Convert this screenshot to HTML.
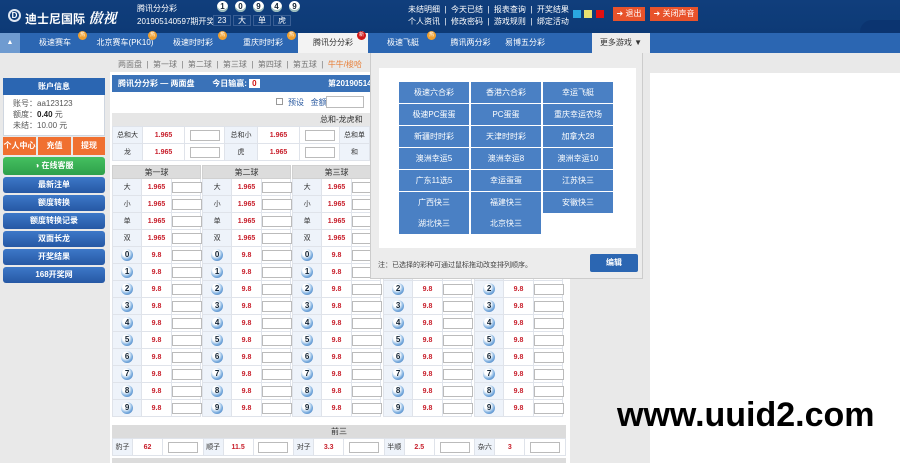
<!DOCTYPE html>
<html><head><meta charset="utf-8"><style>
*{margin:0;padding:0;box-sizing:border-box}
body{width:900px;height:463px;overflow:hidden;background:#e9e9e9;font-family:"Liberation Sans","Noto Sans CJK SC",sans-serif;font-size:8px;color:#333;position:relative}
.a{position:absolute}
#hd{left:0;top:0;width:900px;height:33px;background:linear-gradient(#103e7c,#0d3a76)}
#nav{left:0;top:33px;width:900px;height:20px;background:#2b66b2}
.tab{position:absolute;top:33px;height:20px;line-height:20px;color:#fff;font-size:8px;text-align:center}
.bd{position:absolute;top:31px;width:9px;height:9px;border-radius:50%;background:#f0a030;color:#fff;font-size:5px;line-height:9px;text-align:center}
.wb{display:inline-block;width:11px;height:11px;border-radius:50%;background:#fff;color:#123;font-weight:bold;font-size:8px;line-height:11px;text-align:center;margin-right:7px;box-shadow:inset 0 -2px 0 #9bb}
.bx{display:inline-block;width:18px;height:11px;border:1px solid #3a5f95;color:#fff;text-align:center;line-height:9px;margin-right:2px;background:#113f7d}
.lbtn{position:absolute;left:3px;width:102px;height:16px;border-radius:3px;background:linear-gradient(#3d78c8,#2658a4);color:#fff;font-weight:bold;text-align:center;line-height:16px;font-size:8px}
table{border-collapse:collapse;position:absolute;table-layout:fixed}
td{border:1px solid #dfe3ea;height:17px;text-align:center;font-size:7px;padding:0}
td.l{background:#eef3fa;width:20px}
td.o{color:#c8202c;width:30px;font-weight:bold}
td.i span{display:inline-block;width:30px;height:11px;border:1px solid #bbb;vertical-align:middle;background:#fff}
.ball{display:inline-block;width:12px;height:12px;border-radius:50%;background:radial-gradient(circle at 40% 35%,#fff 0 30%,#7fb0e0 60%,#2a66b0);color:#123;font-weight:bold;font-size:8px;line-height:12px}
th{background:#dcdcdc;font-weight:normal;height:13px;font-size:8px;border:1px solid #d0d0d0}
.g{position:absolute;top:165px;width:89px}
.pc{position:absolute;width:70px;height:21px;background:#4a80c4;color:#fff;text-align:center;line-height:21px;font-size:8px}
</style></head><body>
<div id="hd" class="a"></div>
<div class="a" style="left:8px;top:9px;width:13px;height:13px;border:2px solid #dfe7f2;border-radius:50%;color:#fff;font-size:8px;line-height:9px;text-align:center;font-weight:bold">D</div>
<div class="a" style="left:25px;top:8px;color:#fff;font-size:12px;font-weight:bold">迪士尼国际<span style="font-family:'Noto Serif CJK SC',serif;font-style:italic;font-size:14px"> 傲视</span></div>
<div class="a" style="left:137px;top:3px;color:#fff;font-size:8px">腾讯分分彩</div>
<div class="a" style="left:137px;top:16px;color:#fff;font-size:8px">201905140597期开奖</div>
<div class="a" style="left:213px;top:15px"><span class="bx">23</span><span class="bx">大</span><span class="bx">单</span><span class="bx">虎</span></div>
<div class="a" style="left:217px;top:1px"><span class="wb">1</span><span class="wb">0</span><span class="wb">9</span><span class="wb">4</span><span class="wb">9</span></div>
<div class="a" style="left:408px;top:4px;color:#fff;font-size:8px;line-height:12px">未结明细 &nbsp;|&nbsp; 今天已结 &nbsp;|&nbsp; 报表查询 &nbsp;|&nbsp; 开奖结果<br>个人资讯 &nbsp;|&nbsp; 修改密码 &nbsp;|&nbsp; 游戏规则 &nbsp;|&nbsp; 绑定活动</div>
<div class="a" style="left:573px;top:10px;width:8px;height:8px;background:#2aa7e0"></div>
<div class="a" style="left:584px;top:10px;width:8px;height:8px;background:#e8e070"></div>
<div class="a" style="left:596px;top:10px;width:8px;height:8px;background:#e01010"></div>
<div class="a" style="left:613px;top:7px;width:32px;height:14px;background:#e8532b;color:#fff;line-height:14px;text-align:center;font-size:8px">➜ 退出</div>
<div class="a" style="left:650px;top:7px;width:48px;height:14px;background:#e8532b;color:#fff;line-height:14px;text-align:center;font-size:8px">➜ 关闭声音</div>
<div class="a" style="left:860px;top:20px;width:40px;height:13px;background:#0b3470;border-top-left-radius:12px"></div>

<div id="nav" class="a"></div>
<div class="a" style="left:0;top:33px;width:20px;height:20px;background:#6f9bd0;color:#fff;text-align:center;line-height:20px;font-size:7px">▲</div>
<div class="tab" style="left:20px;width:70px">极速赛车</div>
<div class="tab" style="left:90px;width:70px">北京赛车(PK10)</div>
<div class="tab" style="left:158px;width:70px">极速时时彩</div>
<div class="tab" style="left:228px;width:70px">重庆时时彩</div>
<div class="tab" style="left:298px;width:70px;background:#f3f3f3;color:#333">腾讯分分彩</div>
<div class="tab" style="left:368px;width:70px">极速飞艇</div>
<div class="tab" style="left:438px;width:65px">腾讯两分彩</div>
<div class="tab" style="left:495px;width:60px">易博五分彩</div>
<div class="tab" style="left:592px;width:58px;background:#ececec;color:#333">更多游戏 ▼</div>
<div class="bd" style="left:78px">热</div><div class="bd" style="left:148px">热</div><div class="bd" style="left:218px">热</div><div class="bd" style="left:287px">热</div><div class="bd" style="left:357px;background:#d01818">新</div><div class="bd" style="left:427px">热</div>

<div class="a" style="left:118px;top:59px;color:#777;font-size:8px">两面盘 &nbsp;|&nbsp; 第一球 &nbsp;|&nbsp; 第二球 &nbsp;|&nbsp; 第三球 &nbsp;|&nbsp; 第四球 &nbsp;|&nbsp; 第五球 &nbsp;|&nbsp; <span style="color:#e8803a">牛牛/梭哈</span></div>

<!-- sidebar -->
<div class="a" style="left:3px;top:78px;width:102px;height:58px;background:#fff;border:1px solid #cfd6e0"></div>
<div class="a" style="left:3px;top:78px;width:102px;height:17px;background:#2b66b2;color:#fff;text-align:center;line-height:17px;font-weight:bold">账户信息</div>
<div class="a" style="left:13px;top:98px;font-size:8px;line-height:11px;color:#555">账号：aa123123<br>额度：<b style="color:#222">0.40</b> 元<br>未结：10.00 元</div>
<div class="a" style="left:3px;top:137px;width:33px;height:18px;background:#f07030;color:#fff;text-align:center;line-height:18px;font-weight:bold">个人中心</div>
<div class="a" style="left:38px;top:137px;width:33px;height:18px;background:#f07030;color:#fff;text-align:center;line-height:18px;font-weight:bold">充值</div>
<div class="a" style="left:73px;top:137px;width:32px;height:18px;background:#f07030;color:#fff;text-align:center;line-height:18px;font-weight:bold">提现</div>
<div class="a" style="left:3px;top:157px;width:102px;height:18px;background:linear-gradient(#45c060,#2ea04a);color:#fff;text-align:center;line-height:18px;font-weight:bold;border-radius:3px">◑ 在线客服</div>
<div class="lbtn" style="top:177px">最新注单</div>
<div class="lbtn" style="top:195px">额度转换</div>
<div class="lbtn" style="top:213px">额度转换记录</div>
<div class="lbtn" style="top:231px">双面长龙</div>
<div class="lbtn" style="top:249px">开奖结果</div>
<div class="lbtn" style="top:267px">168开奖网</div>

<!-- main -->
<div class="a" style="left:110px;top:72px;width:460px;height:391px;background:#fff"></div>
<div class="a" style="left:112px;top:75px;width:456px;height:17px;background:#3a72b8;color:#fff;font-weight:bold;line-height:17px;padding-left:6px">腾讯分分彩 — 两面盘 &nbsp;&nbsp;&nbsp;&nbsp;&nbsp;&nbsp; 今日输赢: <span style="background:#fff;color:#d01010;padding:0 3px">0</span><span style="position:absolute;left:216px">第2019051400期</span></div>
<div class="a" style="left:276px;top:98px;width:7px;height:7px;border:1px solid #999"></div>
<div class="a" style="left:288px;top:97px;color:#2a5aa0">预设 &nbsp; 金额</div>
<div class="a" style="left:326px;top:96px;width:38px;height:12px;border:1px solid #bbb"></div>
<div class="a" style="left:112px;top:113px;width:456px;height:13px;background:#e6e6e6;line-height:13px;padding-left:208px">总和-龙虎和</div>
<table style="left:112px;top:126px;width:456px"><tr><td class="l" style="width:30px">总和大</td><td class="o" style="width:42px">1.965</td><td class="i" style="width:40px"><span></span></td><td class="l" style="width:33px">总和小</td><td class="o" style="width:42px">1.965</td><td class="i" style="width:40px"><span></span></td><td class="l" style="width:30px">总和单</td><td class="o">1.965</td><td class="i"><span></span></td></tr>
<tr><td class="l">龙</td><td class="o">1.965</td><td class="i"><span></span></td><td class="l">虎</td><td class="o">1.965</td><td class="i"><span></span></td><td class="l">和</td><td class="o">9.5</td><td class="i"><span></span></td></tr></table>

<table class="g" style="left:112px"><tr><th colspan="3">第一球</th></tr>
<tr><td class="l">大</td><td class="o">1.965</td><td class="i"><span></span></td></tr><tr><td class="l">小</td><td class="o">1.965</td><td class="i"><span></span></td></tr><tr><td class="l">单</td><td class="o">1.965</td><td class="i"><span></span></td></tr><tr><td class="l">双</td><td class="o">1.965</td><td class="i"><span></span></td></tr>
<tr><td class="l"><b class="ball">0</b></td><td class="o">9.8</td><td class="i"><span></span></td></tr><tr><td class="l"><b class="ball">1</b></td><td class="o">9.8</td><td class="i"><span></span></td></tr><tr><td class="l"><b class="ball">2</b></td><td class="o">9.8</td><td class="i"><span></span></td></tr><tr><td class="l"><b class="ball">3</b></td><td class="o">9.8</td><td class="i"><span></span></td></tr><tr><td class="l"><b class="ball">4</b></td><td class="o">9.8</td><td class="i"><span></span></td></tr><tr><td class="l"><b class="ball">5</b></td><td class="o">9.8</td><td class="i"><span></span></td></tr><tr><td class="l"><b class="ball">6</b></td><td class="o">9.8</td><td class="i"><span></span></td></tr><tr><td class="l"><b class="ball">7</b></td><td class="o">9.8</td><td class="i"><span></span></td></tr><tr><td class="l"><b class="ball">8</b></td><td class="o">9.8</td><td class="i"><span></span></td></tr><tr><td class="l"><b class="ball">9</b></td><td class="o">9.8</td><td class="i"><span></span></td></tr></table>
<table class="g" style="left:202px"><tr><th colspan="3">第二球</th></tr>
<tr><td class="l">大</td><td class="o">1.965</td><td class="i"><span></span></td></tr><tr><td class="l">小</td><td class="o">1.965</td><td class="i"><span></span></td></tr><tr><td class="l">单</td><td class="o">1.965</td><td class="i"><span></span></td></tr><tr><td class="l">双</td><td class="o">1.965</td><td class="i"><span></span></td></tr>
<tr><td class="l"><b class="ball">0</b></td><td class="o">9.8</td><td class="i"><span></span></td></tr><tr><td class="l"><b class="ball">1</b></td><td class="o">9.8</td><td class="i"><span></span></td></tr><tr><td class="l"><b class="ball">2</b></td><td class="o">9.8</td><td class="i"><span></span></td></tr><tr><td class="l"><b class="ball">3</b></td><td class="o">9.8</td><td class="i"><span></span></td></tr><tr><td class="l"><b class="ball">4</b></td><td class="o">9.8</td><td class="i"><span></span></td></tr><tr><td class="l"><b class="ball">5</b></td><td class="o">9.8</td><td class="i"><span></span></td></tr><tr><td class="l"><b class="ball">6</b></td><td class="o">9.8</td><td class="i"><span></span></td></tr><tr><td class="l"><b class="ball">7</b></td><td class="o">9.8</td><td class="i"><span></span></td></tr><tr><td class="l"><b class="ball">8</b></td><td class="o">9.8</td><td class="i"><span></span></td></tr><tr><td class="l"><b class="ball">9</b></td><td class="o">9.8</td><td class="i"><span></span></td></tr></table>
<table class="g" style="left:292px"><tr><th colspan="3">第三球</th></tr>
<tr><td class="l">大</td><td class="o">1.965</td><td class="i"><span></span></td></tr><tr><td class="l">小</td><td class="o">1.965</td><td class="i"><span></span></td></tr><tr><td class="l">单</td><td class="o">1.965</td><td class="i"><span></span></td></tr><tr><td class="l">双</td><td class="o">1.965</td><td class="i"><span></span></td></tr>
<tr><td class="l"><b class="ball">0</b></td><td class="o">9.8</td><td class="i"><span></span></td></tr><tr><td class="l"><b class="ball">1</b></td><td class="o">9.8</td><td class="i"><span></span></td></tr><tr><td class="l"><b class="ball">2</b></td><td class="o">9.8</td><td class="i"><span></span></td></tr><tr><td class="l"><b class="ball">3</b></td><td class="o">9.8</td><td class="i"><span></span></td></tr><tr><td class="l"><b class="ball">4</b></td><td class="o">9.8</td><td class="i"><span></span></td></tr><tr><td class="l"><b class="ball">5</b></td><td class="o">9.8</td><td class="i"><span></span></td></tr><tr><td class="l"><b class="ball">6</b></td><td class="o">9.8</td><td class="i"><span></span></td></tr><tr><td class="l"><b class="ball">7</b></td><td class="o">9.8</td><td class="i"><span></span></td></tr><tr><td class="l"><b class="ball">8</b></td><td class="o">9.8</td><td class="i"><span></span></td></tr><tr><td class="l"><b class="ball">9</b></td><td class="o">9.8</td><td class="i"><span></span></td></tr></table>
<table class="g" style="left:383px"><tr><th colspan="3">第四球</th></tr>
<tr><td class="l">大</td><td class="o">1.965</td><td class="i"><span></span></td></tr><tr><td class="l">小</td><td class="o">1.965</td><td class="i"><span></span></td></tr><tr><td class="l">单</td><td class="o">1.965</td><td class="i"><span></span></td></tr><tr><td class="l">双</td><td class="o">1.965</td><td class="i"><span></span></td></tr>
<tr><td class="l"><b class="ball">0</b></td><td class="o">9.8</td><td class="i"><span></span></td></tr><tr><td class="l"><b class="ball">1</b></td><td class="o">9.8</td><td class="i"><span></span></td></tr><tr><td class="l"><b class="ball">2</b></td><td class="o">9.8</td><td class="i"><span></span></td></tr><tr><td class="l"><b class="ball">3</b></td><td class="o">9.8</td><td class="i"><span></span></td></tr><tr><td class="l"><b class="ball">4</b></td><td class="o">9.8</td><td class="i"><span></span></td></tr><tr><td class="l"><b class="ball">5</b></td><td class="o">9.8</td><td class="i"><span></span></td></tr><tr><td class="l"><b class="ball">6</b></td><td class="o">9.8</td><td class="i"><span></span></td></tr><tr><td class="l"><b class="ball">7</b></td><td class="o">9.8</td><td class="i"><span></span></td></tr><tr><td class="l"><b class="ball">8</b></td><td class="o">9.8</td><td class="i"><span></span></td></tr><tr><td class="l"><b class="ball">9</b></td><td class="o">9.8</td><td class="i"><span></span></td></tr></table>
<table class="g" style="left:474px"><tr><th colspan="3">第五球</th></tr>
<tr><td class="l">大</td><td class="o">1.965</td><td class="i"><span></span></td></tr><tr><td class="l">小</td><td class="o">1.965</td><td class="i"><span></span></td></tr><tr><td class="l">单</td><td class="o">1.965</td><td class="i"><span></span></td></tr><tr><td class="l">双</td><td class="o">1.965</td><td class="i"><span></span></td></tr>
<tr><td class="l"><b class="ball">0</b></td><td class="o">9.8</td><td class="i"><span></span></td></tr><tr><td class="l"><b class="ball">1</b></td><td class="o">9.8</td><td class="i"><span></span></td></tr><tr><td class="l"><b class="ball">2</b></td><td class="o">9.8</td><td class="i"><span></span></td></tr><tr><td class="l"><b class="ball">3</b></td><td class="o">9.8</td><td class="i"><span></span></td></tr><tr><td class="l"><b class="ball">4</b></td><td class="o">9.8</td><td class="i"><span></span></td></tr><tr><td class="l"><b class="ball">5</b></td><td class="o">9.8</td><td class="i"><span></span></td></tr><tr><td class="l"><b class="ball">6</b></td><td class="o">9.8</td><td class="i"><span></span></td></tr><tr><td class="l"><b class="ball">7</b></td><td class="o">9.8</td><td class="i"><span></span></td></tr><tr><td class="l"><b class="ball">8</b></td><td class="o">9.8</td><td class="i"><span></span></td></tr><tr><td class="l"><b class="ball">9</b></td><td class="o">9.8</td><td class="i"><span></span></td></tr></table>

<div class="a" style="left:112px;top:425px;width:454px;height:13px;background:#dcdcdc;text-align:center;line-height:13px">前三</div>
<table style="left:112px;top:438px;width:454px"><tr><td class="l">豹子</td><td class="o">62</td><td class="i"><span></span></td><td class="l">顺子</td><td class="o">11.5</td><td class="i"><span></span></td><td class="l">对子</td><td class="o">3.3</td><td class="i"><span></span></td><td class="l">半顺</td><td class="o">2.5</td><td class="i"><span></span></td><td class="l">杂六</td><td class="o">3</td><td class="i"><span></span></td></tr></table>
<div class="a" style="left:112px;top:458px;width:454px;height:5px;background:#dcdcdc"></div>

<!-- right white -->
<div class="a" style="left:650px;top:73px;width:250px;height:390px;background:#fff"></div>

<!-- popup -->
<div class="a" style="left:370px;top:53px;width:273px;height:226px;background:#ececec;border:1px solid #ccc;border-top:none"></div>
<div class="a" style="left:379px;top:68px;width:257px;height:180px;background:#fff"></div>
<div class="pc" style="left:399px;top:82px">极速六合彩</div><div class="pc" style="left:471px;top:82px">香港六合彩</div><div class="pc" style="left:543px;top:82px">幸运飞艇</div>
<div class="pc" style="left:399px;top:104px">极速PC蛋蛋</div><div class="pc" style="left:471px;top:104px">PC蛋蛋</div><div class="pc" style="left:543px;top:104px">重庆幸运农场</div>
<div class="pc" style="left:399px;top:126px">新疆时时彩</div><div class="pc" style="left:471px;top:126px">天津时时彩</div><div class="pc" style="left:543px;top:126px">加拿大28</div>
<div class="pc" style="left:399px;top:148px">澳洲幸运5</div><div class="pc" style="left:471px;top:148px">澳洲幸运8</div><div class="pc" style="left:543px;top:148px">澳洲幸运10</div>
<div class="pc" style="left:399px;top:170px">广东11选5</div><div class="pc" style="left:471px;top:170px">幸运蛋蛋</div><div class="pc" style="left:543px;top:170px">江苏快三</div>
<div class="pc" style="left:399px;top:192px">广西快三</div><div class="pc" style="left:471px;top:192px">福建快三</div><div class="pc" style="left:543px;top:192px">安徽快三</div>
<div class="pc" style="left:399px;top:213px">湖北快三</div><div class="pc" style="left:471px;top:213px">北京快三</div>
<div class="a" style="left:378px;top:260px;font-size:7px;color:#444">注：已选择的彩种可通过鼠标拖动改变排列顺序。</div>
<div class="a" style="left:590px;top:254px;width:48px;height:18px;background:#2b66b2;border-radius:2px;color:#fff;text-align:center;line-height:18px;font-weight:bold">编辑</div>

<div class="a" style="left:617px;top:395px;font-size:34px;line-height:40px;font-weight:bold;color:#000;font-family:'Liberation Sans',sans-serif">www.uuid2.com</div>
</body></html>
